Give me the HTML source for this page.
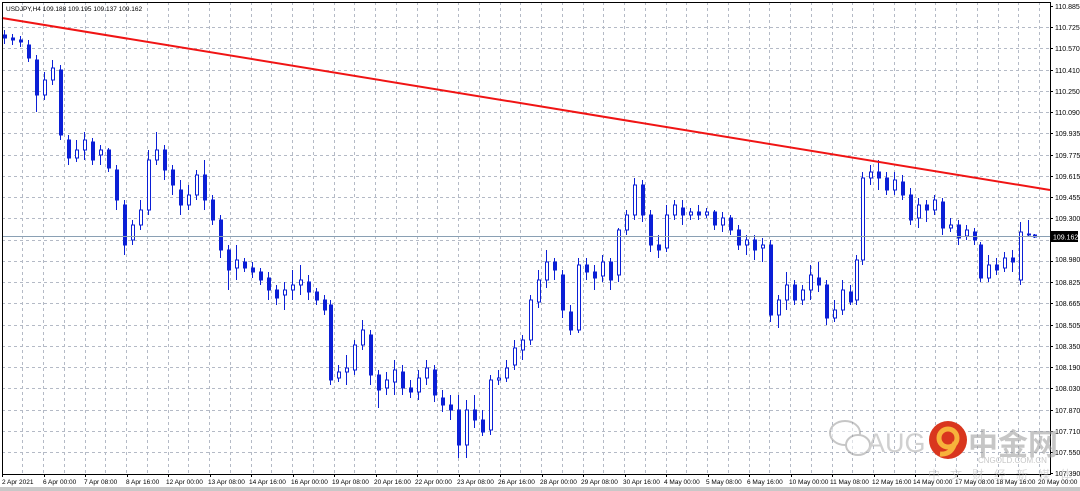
<!DOCTYPE html>
<html><head><meta charset="utf-8"><style>
html,body{margin:0;padding:0;background:#fff;width:1080px;height:491px;overflow:hidden}
svg{display:block}
.g{stroke:#b4bac6;stroke-width:1;stroke-dasharray:3,3}
.u{fill:#fff;stroke:#0b1fd6;stroke-width:1}
.d{fill:#0b1fd6;stroke:#0b1fd6;stroke-width:1}
.p{font-size:7px;fill:#000;font-family:"Liberation Sans",sans-serif}
</style></head><body>
<svg width="1080" height="491" xmlns="http://www.w3.org/2000/svg">
<path class="g" d="M22.5 2V474M43.5 2V474M64.5 2V474M85.5 2V474M105.5 2V474M126.5 2V474M147.5 2V474M168.5 2V474M188.5 2V474M209.5 2V474M230.5 2V474M251.5 2V474M271.5 2V474M292.5 2V474M313.5 2V474M334.5 2V474M354.5 2V474M375.5 2V474M396.5 2V474M417.5 2V474M437.5 2V474M458.5 2V474M479.5 2V474M500.5 2V474M520.5 2V474M541.5 2V474M562.5 2V474M583.5 2V474M603.5 2V474M624.5 2V474M645.5 2V474M666.5 2V474M686.5 2V474M707.5 2V474M728.5 2V474M749.5 2V474M769.5 2V474M790.5 2V474M811.5 2V474M832.5 2V474M852.5 2V474M873.5 2V474M894.5 2V474M915.5 2V474M935.5 2V474M956.5 2V474M977.5 2V474M998.5 2V474M1018.5 2V474M1039.5 2V474"/>
<path class="g" d="M2 27.5H1050M2 48.5H1050M2 70.5H1050M2 91.5H1050M2 112.5H1050M2 133.5H1050M2 155.5H1050M2 176.5H1050M2 197.5H1050M2 218.5H1050M2 240.5H1050M2 261.5H1050M2 282.5H1050M2 303.5H1050M2 325.5H1050M2 346.5H1050M2 367.5H1050M2 388.5H1050M2 410.5H1050M2 431.5H1050M2 452.5H1050"/>
<path stroke="#000" d="M1050 6.5h3M1050 27.5h3M1050 48.5h3M1050 70.5h3M1050 91.5h3M1050 112.5h3M1050 133.5h3M1050 155.5h3M1050 176.5h3M1050 197.5h3M1050 218.5h3M1050 240.5h3M1050 261.5h3M1050 282.5h3M1050 303.5h3M1050 325.5h3M1050 346.5h3M1050 367.5h3M1050 388.5h3M1050 410.5h3M1050 431.5h3M1050 452.5h3M1050 473.5h3"/>
<g class="p">
<text x="1055" y="9">110.885</text><text x="1055" y="30">110.725</text><text x="1055" y="51">110.570</text><text x="1055" y="73">110.410</text><text x="1055" y="94">110.250</text><text x="1055" y="115">110.090</text><text x="1055" y="136">109.935</text><text x="1055" y="158">109.775</text><text x="1055" y="179">109.615</text><text x="1055" y="200">109.455</text><text x="1055" y="221">109.300</text><text x="1055" y="262">108.980</text><text x="1055" y="285">108.825</text><text x="1055" y="306">108.665</text><text x="1055" y="328">108.505</text><text x="1055" y="349">108.350</text><text x="1055" y="370">108.190</text><text x="1055" y="391">108.030</text><text x="1055" y="413">107.870</text><text x="1055" y="434">107.710</text><text x="1055" y="455">107.550</text><text x="1055" y="476">107.390</text>
</g>
<path stroke="#0b1fd6" fill="none" d="M4.5 30V44M12.5 34V45M20.5 36V47M28.5 40V62M36.5 55V112M44.5 72V100M52.5 60V85M60.5 65V140M68.5 135V165M76.5 140V162M84.5 132V160M92.5 138V165M100.5 145V165M108.5 148V172M116.5 165V210M124.5 200V255M132.5 220V245M140.5 200V230M148.5 150V215M156.5 132V165M164.5 145V180M172.5 165V195M180.5 180V215M188.5 185V210M196.5 170V200M204.5 160V210M212.5 195V225M220.5 215V258M228.5 245V290M236.5 245V280M244.5 258V272M252.5 262V278M260.5 268V285M268.5 272V300M276.5 285V305M284.5 282V310M292.5 270V300M300.5 265V295M308.5 275V300M316.5 288V305M324.5 295V315M330.5 300V385M338.5 365V382M346.5 355V385M354.5 340V375M362.5 320V350M370.5 330V385M378.5 370V408M386.5 372V395M394.5 360V395M402.5 365V395M410.5 380V398M418.5 370V400M426.5 360V385M434.5 365V402M442.5 390V412M450.5 395V420M458.5 395V458M466.5 400V458M474.5 395V428M482.5 410V436M490.5 375V435M498.5 370V385M506.5 360V382M514.5 340V370M522.5 335V360M530.5 295V345M538.5 270V308M546.5 250V288M554.5 258V280M562.5 270V318M570.5 305V335M578.5 258V333M586.5 258V280M594.5 265V290M602.5 255V282M610.5 258V290M618.5 228V282M626.5 210V235M634.5 178V220M642.5 180V222M650.5 210V252M658.5 235V258M666.5 205V252M674.5 200V220M682.5 200V225M690.5 208V220M698.5 205V220M706.5 208V218M714.5 210V230M722.5 212V232M730.5 215V235M738.5 225V250M746.5 235V255M754.5 235V260M762.5 238V262M770.5 240V322M778.5 295V328M786.5 272V310M794.5 280V305M802.5 285V305M810.5 265V300M818.5 262V292M826.5 280V325M834.5 300V322M842.5 280V315M850.5 285V305M856.5 255V305M862.5 172V265M870.5 165V185M878.5 160V190M886.5 172V195M894.5 172V195M902.5 175V200M910.5 188V225M918.5 198V228M926.5 200V222M934.5 195V215M942.5 198V235M950.5 218V232M958.5 220V245M966.5 225V240M974.5 228V245M980.5 242V282M988.5 255V282M996.5 258V275M1004.5 252V272M1012.5 250V272M1020.5 222V285M1028.5 220V236M1034.5 234V238"/>
<path class="d" d="M3.5 35h3v3h-3zM11.5 38h3v2h-3zM19.5 40h3v2h-3zM27.5 45h3v13h-3zM35.5 60h3v35h-3zM59.5 70h3v65h-3zM67.5 140h3v18h-3zM91.5 142h3v18h-3zM107.5 150h3v18h-3zM115.5 170h3v30h-3zM123.5 205h3v40h-3zM163.5 150h3v20h-3zM171.5 170h3v15h-3zM179.5 190h3v15h-3zM203.5 175h3v25h-3zM211.5 200h3v20h-3zM219.5 220h3v30h-3zM227.5 250h3v20h-3zM243.5 262h3v6h-3zM251.5 268h3v4h-3zM259.5 272h3v8h-3zM267.5 278h3v12h-3zM275.5 290h3v8h-3zM307.5 282h3v10h-3zM315.5 292h3v8h-3zM323.5 300h3v10h-3zM329.5 305h3v75h-3zM369.5 335h3v40h-3zM377.5 375h3v15h-3zM401.5 372h3v16h-3zM409.5 388h3v4h-3zM433.5 370h3v25h-3zM441.5 398h3v7h-3zM449.5 405h3v5h-3zM457.5 410h3v35h-3zM473.5 410h3v10h-3zM481.5 420h3v12h-3zM553.5 262h3v8h-3zM561.5 275h3v35h-3zM569.5 312h3v18h-3zM585.5 265h3v7h-3zM593.5 272h3v6h-3zM609.5 262h3v18h-3zM641.5 185h3v30h-3zM649.5 215h3v30h-3zM657.5 245h3v5h-3zM681.5 208h3v7h-3zM697.5 212h3v3h-3zM713.5 212h3v13h-3zM729.5 218h3v12h-3zM737.5 230h3v15h-3zM753.5 240h3v10h-3zM769.5 245h3v70h-3zM793.5 285h3v15h-3zM817.5 278h3v7h-3zM825.5 285h3v33h-3zM849.5 292h3v10h-3zM877.5 172h3v6h-3zM885.5 178h3v12h-3zM901.5 182h3v13h-3zM909.5 195h3v25h-3zM925.5 205h3v5h-3zM941.5 202h3v26h-3zM957.5 225h3v13h-3zM973.5 232h3v8h-3zM979.5 245h3v33h-3zM995.5 265h3v5h-3zM1011.5 258h3v4h-3zM1033.5 235h3v2h-3z"/>
<path class="u" d="M43.5 80h3v15h-3zM51.5 68h3v12h-3zM75.5 150h3v8h-3zM83.5 140h3v10h-3zM99.5 150h3v5h-3zM131.5 225h3v15h-3zM139.5 210h3v15h-3zM147.5 160h3v50h-3zM155.5 150h3v10h-3zM187.5 195h3v10h-3zM195.5 175h3v20h-3zM235.5 260h3v8h-3zM283.5 290h3v5h-3zM291.5 285h3v5h-3zM299.5 280h3v5h-3zM337.5 372h3v6h-3zM345.5 368h3v4h-3zM353.5 345h3v25h-3zM361.5 330h3v15h-3zM385.5 380h3v8h-3zM393.5 370h3v12h-3zM417.5 378h3v14h-3zM425.5 368h3v10h-3zM465.5 410h3v35h-3zM489.5 380h3v50h-3zM497.5 378h3v2h-3zM505.5 368h3v10h-3zM513.5 348h3v17h-3zM521.5 340h3v10h-3zM529.5 300h3v40h-3zM537.5 280h3v22h-3zM545.5 262h3v18h-3zM577.5 265h3v65h-3zM601.5 262h3v14h-3zM617.5 230h3v45h-3zM625.5 215h3v15h-3zM633.5 185h3v30h-3zM665.5 215h3v33h-3zM673.5 205h3v10h-3zM689.5 212h3v3h-3zM705.5 212h3v3h-3zM721.5 218h3v7h-3zM745.5 240h3v5h-3zM761.5 245h3v3h-3zM777.5 300h3v15h-3zM785.5 285h3v15h-3zM801.5 290h3v10h-3zM809.5 275h3v15h-3zM833.5 310h3v8h-3zM841.5 290h3v20h-3zM855.5 260h3v40h-3zM861.5 178h3v82h-3zM869.5 172h3v6h-3zM893.5 180h3v10h-3zM917.5 205h3v13h-3zM933.5 200h3v10h-3zM949.5 225h3v3h-3zM965.5 230h3v6h-3zM987.5 265h3v13h-3zM1003.5 258h3v10h-3zM1019.5 232h3v48h-3zM1027.5 234h3v1h-3z"/>
<line x1="2" y1="236.5" x2="1050" y2="236.5" stroke="#8aa0b4"/>
<rect x="1051" y="231" width="27" height="11" fill="#000"/>
<text x="1053" y="239.5" font-family="Liberation Sans,sans-serif" font-size="7" fill="#fff">109.162</text>
<line x1="2" y1="18" x2="1050" y2="190" stroke="#f01414" stroke-width="2"/>
<rect x="2.5" y="2.5" width="1048" height="472" fill="none" stroke="#000"/>
<path stroke="#000" d="M2.5 474v3M44.5 474v3M85.5 474v3M127.5 474v3M168.5 474v3M210.5 474v3M251.5 474v3M293.5 474v3M334.5 474v3M376.5 474v3M417.5 474v3M459.5 474v3M500.5 474v3M542.5 474v3M583.5 474v3M625.5 474v3M666.5 474v3M708.5 474v3M749.5 474v3M791.5 474v3M832.5 474v3M874.5 474v3M915.5 474v3M957.5 474v3M998.5 474v3M1040.5 474v3"/>
<g font-family="Liberation Sans,sans-serif" font-size="6.5" fill="#000">
<text x="2" y="484">2 Apr 2021</text><text x="43" y="484">6 Apr 00:00</text><text x="84" y="484">7 Apr 08:00</text><text x="126" y="484">8 Apr 16:00</text><text x="166" y="484">12 Apr 00:00</text><text x="208" y="484">13 Apr 08:00</text><text x="249" y="484">14 Apr 16:00</text><text x="291" y="484">16 Apr 00:00</text><text x="332" y="484">19 Apr 08:00</text><text x="374" y="484">20 Apr 16:00</text><text x="415" y="484">22 Apr 00:00</text><text x="457" y="484">23 Apr 08:00</text><text x="498" y="484">26 Apr 16:00</text><text x="540" y="484">28 Apr 00:00</text><text x="581" y="484">29 Apr 08:00</text><text x="623" y="484">30 Apr 16:00</text><text x="664" y="484">4 May 00:00</text><text x="706" y="484">5 May 08:00</text><text x="747" y="484">6 May 16:00</text><text x="789" y="484">10 May 00:00</text><text x="830" y="484">11 May 08:00</text><text x="872" y="484">12 May 16:00</text><text x="913" y="484">14 May 00:00</text><text x="955" y="484">17 May 08:00</text><text x="996" y="484">18 May 16:00</text><text x="1038" y="484">20 May 00:00</text>
<text x="6" y="11">USDJPY,H4  109.188 109.195 109.137 109.162</text>
</g>
<rect x="0" y="487" width="1080" height="4" fill="#c8c8c8"/>
<g opacity="0.55">
<ellipse cx="845" cy="433" rx="15" ry="12" fill="#fff" stroke="#999" stroke-width="2"/>
<ellipse cx="858" cy="445" rx="12" ry="10" fill="#fff" stroke="#999" stroke-width="2"/>
<text x="867" y="452" font-family="Liberation Sans,sans-serif" font-size="27" fill="#aaa">AUG</text>
<text x="968" y="455" font-family="Noto Sans CJK SC,sans-serif" font-size="30" font-weight="bold" fill="#999">中金网</text>
<text x="978" y="463" font-family="Liberation Sans,sans-serif" font-size="8" fill="#999">CNGOLD.COM.CN</text>
<text x="928" y="479" font-family="Noto Sans CJK SC,sans-serif" font-size="12" fill="#bbb" letter-spacing="10">中文财经新媒体</text>
</g>
<circle cx="948" cy="440" r="19" fill="#d9361e"/>
<circle cx="948" cy="438" r="9" fill="none" stroke="#f7b23b" stroke-width="5"/>
<path d="M955 442 Q952 455 940 454" fill="none" stroke="#f7b23b" stroke-width="5"/>
</svg>
</body></html>
